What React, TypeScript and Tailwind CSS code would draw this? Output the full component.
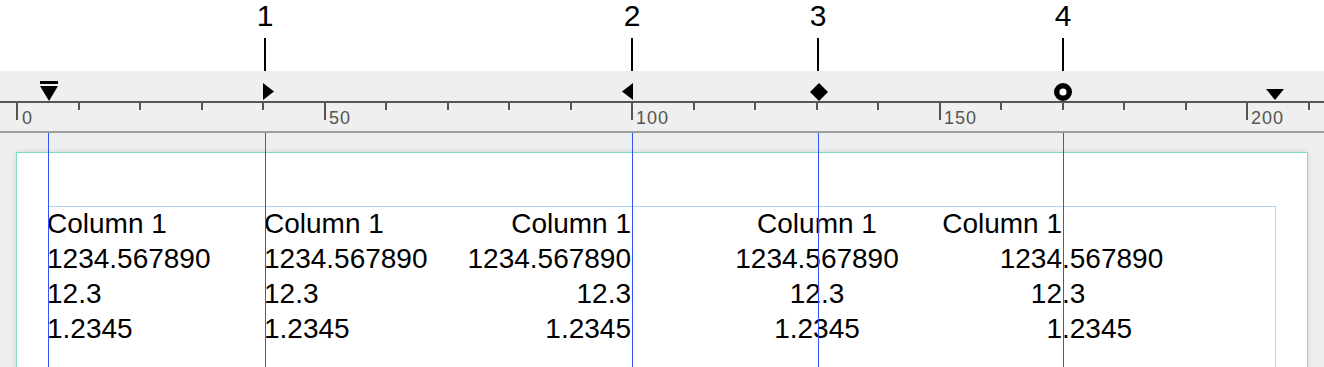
import React from 'react';

const tabs = [
  { n: '1', x: 265 },
  { n: '2', x: 632 },
  { n: '3', x: 818 },
  { n: '4', x: 1063 },
];

const guides = [48, 265, 632, 818, 1063];

const rows = [
  { a: 'Column 1', int: 'Column 1', frac: '' },
  { a: '1234.567890', int: '1234', frac: '.567890' },
  { a: '12.3', int: '12', frac: '.3' },
  { a: '1.2345', int: '1', frac: '.2345' },
];

function Ruler() {
  const ticks = [];
  for (let i = 0; i < 22; i++) {
    const x = Math.round(17 + 61.5 * i);
    const major = i % 5 === 0;
    ticks.push(<rect key={i} x={x - 1} y={31} width={2} height={major ? 18 : 8} fill="#555" />);
  }
  return (
    <svg width="1324" height="60" className="absolute left-0 top-0">
      <rect x="0" y="30" width="1324" height="2" fill="#555" />
      {ticks}
      {/* left indent */}
      <rect x="40" y="10" width="18" height="3" fill="#000" />
      <polygon points="40,15 58,15 49,30" fill="#000" />
      {/* left tab */}
      <polygon points="263,12 263,29 274,20.5" fill="#000" />
      {/* right tab */}
      <polygon points="633,12 633,29 622,20.5" fill="#000" />
      {/* center tab */}
      <polygon points="819,12 828,21 819,30 810,21" fill="#000" />
      {/* decimal tab */}
      <circle cx="1063" cy="21" r="6.3" fill="#fff" stroke="#000" strokeWidth="5.4" />
      {/* right indent */}
      <polygon points="1266,18 1284,18 1275,29" fill="#000" />
    </svg>
  );
}

export default function App() {
  return (
    <div className="w-[1324px] h-[367px] overflow-hidden bg-white flex flex-col font-['Liberation_Sans',Arial,sans-serif] text-black">
      <div className="relative h-[71px] shrink-0">
        {tabs.map((t) => (
          <div key={t.n} className="absolute top-0 w-[40px] -ml-[20px] flex flex-col items-center" style={{ left: t.x }}>
            <span className="text-[30px] leading-[32px]">{t.n}</span>
            <span className="mt-[6px] w-[2px] h-[33px] bg-black" />
          </div>
        ))}
      </div>

      <div className="relative h-[60px] shrink-0 bg-[#efefef]">
        <Ruler />
        {[
          ['0', 22],
          ['50', 329],
          ['100', 636],
          ['150', 944],
          ['200', 1251],
        ].map(([l, x]) => (
          <span
            key={l}
            className="absolute top-[38px] text-[18px] leading-[18px] tracking-[1px] text-[#555]"
            style={{ left: x as number }}
          >
            {l}
          </span>
        ))}
      </div>
      <div className="h-[2px] shrink-0 bg-[#9d9d9d]" />

      <div className="relative flex-1 bg-[#efefef] pt-[19px] pl-[16px]">
        <div className="w-[1292px] h-[260px] bg-white border border-[#7ee0c0] shadow-[0_0_6px_rgba(0,0,0,0.12)] pt-[53px] pl-[31px]">
          <div className="w-[1228px] h-[200px] border-t border-l border-r border-[#a8d4fb]">
            <div className="-ml-[2px] -mt-[1px] text-[28px] leading-[35px]">
              {rows.map((r, i) => (
                <div key={i} className="flex whitespace-nowrap">
                  <div className="w-[217px] shrink-0">{r.a}</div>
                  <div className="w-[183px] shrink-0">{r.a}</div>
                  <div className="w-[184px] shrink-0 text-right">{r.a}</div>
                  <div className="w-[68px] shrink-0" />
                  <div className="w-[236px] shrink-0 text-center">{r.a}</div>
                  <div className="w-[127px] shrink-0 text-right">{r.int}</div>
                  <div className="shrink-0">{r.frac}</div>
                </div>
              ))}
            </div>
          </div>
        </div>
        {guides.map((x) => (
          <div key={x} className="absolute top-0 bottom-0 w-px bg-[#3552ff]" style={{ left: x }} />
        ))}
      </div>
    </div>
  );
}
